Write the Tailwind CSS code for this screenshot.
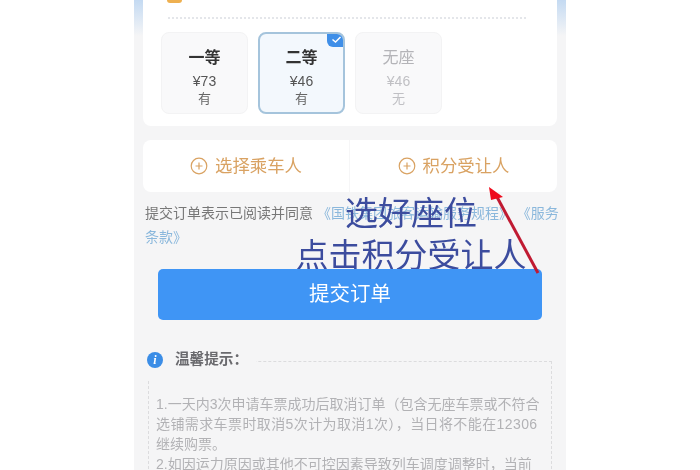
<!DOCTYPE html>
<html lang="zh">
<head>
  <meta charset="UTF-8">
  <title>提交订单</title>
  <script src="https://cdn.jsdelivr.net/npm/@tailwindcss/browser@4"></script>
</head>
<body class="bg-white overflow-hidden font-['Liberation_Sans','Noto_Sans_CJK_SC',sans-serif]">
  <div class="relative w-[700px] h-[470px] overflow-hidden blur-[0.6px]">
    <div class="relative mx-auto w-[432px] h-[470px] overflow-hidden bg-[#f5f5f6] px-[9px]">
      <div class="absolute left-0 right-0 top-0 h-[36px] bg-gradient-to-b from-[#c4daf2] to-[#f5f5f6]"></div>

      <!-- seat card -->
      <div class="relative h-[126px] bg-white rounded-b-lg px-[18px]">
        <div class="absolute left-[24px] top-[-6px] w-[15px] h-[9px] rounded-[3px] bg-[#eeb050]"></div>
        <div class="absolute left-[43px] top-[-11px] text-[10px] leading-[14px] text-[#aaa]">二等座</div>
        <div class="h-[19px] w-[358px] ml-[7px] border-b-2 border-dotted border-[#e4e6ea]"></div>
        <div class="flex gap-[10px] pt-[13px]">
          <div class="w-[87px] h-[82px] flex flex-col items-center rounded-lg bg-[#f9f9fa] border border-[#f3f3f4] pt-[15px]">
            <span class="text-[16px] leading-[20px] font-bold text-[#333]">一等</span>
            <span class="text-[14px] leading-[18px] mt-[4px] font-medium text-[#555]">¥73</span>
            <span class="text-[13px] leading-[18px] text-[#666]">有</span>
          </div>
          <div class="relative w-[87px] h-[82px] flex flex-col items-center rounded-lg bg-[#f3f8fd] border-2 border-[#a5c4dc] pt-[14px] overflow-hidden">
            <span class="text-[16px] leading-[20px] font-bold text-[#333]">二等</span>
            <span class="text-[14px] leading-[18px] mt-[4px] font-medium text-[#555]">¥46</span>
            <span class="text-[13px] leading-[18px] text-[#666]">有</span>
            <div class="absolute right-[-2px] top-[-2px] w-[18px] h-[15px] rounded-bl-md bg-[#3f8fe8] flex items-center justify-center">
              <svg width="11" height="9" viewBox="0 0 11 9" fill="none" stroke="#fff" stroke-width="1.5"><path d="M1.5 4.5 4.5 7 9.5 2"/></svg>
            </div>
          </div>
          <div class="w-[87px] h-[82px] flex flex-col items-center rounded-lg bg-[#f9f9fa] border border-[#f3f3f4] pt-[15px]">
            <span class="text-[16px] leading-[20px] text-[#b4b4b8]">无座</span>
            <span class="text-[14px] leading-[18px] mt-[4px] text-[#c0c0c4]">¥46</span>
            <span class="text-[13px] leading-[18px] text-[#c0c0c4]">无</span>
          </div>
        </div>
      </div>

      <!-- passengers -->
      <div class="relative mt-[14px] h-[52px] bg-white rounded-lg flex text-[17.4px] text-[#d9a262]">
        <div class="w-[207px] flex items-center justify-center gap-[7px] border-r border-[#f6f6f7]">
          <svg width="18" height="18" viewBox="0 0 18 18" fill="none" stroke="#d9a262" stroke-width="1.2"><circle cx="9" cy="9" r="7.8"/><path d="M9 5.5v7M5.5 9h7"/></svg>
          <span>选择乘车人</span>
        </div>
        <div class="flex-1 flex items-center justify-center gap-[7px]">
          <svg width="18" height="18" viewBox="0 0 18 18" fill="none" stroke="#d9a262" stroke-width="1.2"><circle cx="9" cy="9" r="7.8"/><path d="M9 5.5v7M5.5 9h7"/></svg>
          <span>积分受让人</span>
        </div>
      </div>

      <!-- terms -->
      <p class="relative mt-[9px] px-[2px] text-[14px] leading-[24px] text-[#777] whitespace-nowrap">提交订单表示已阅读并同意 <span class="text-[#8bb8dc]">《国铁集团旅客运输服务规程》 《服务<br>条款》</span></p>

      <!-- submit -->
      <div class="relative z-10 mt-[20px] mx-[15px] h-[51px] rounded-[5px] bg-[#3f95f5] flex items-center justify-center text-[20.5px] text-white">提交订单</div>

      <!-- tips -->
      <div class="relative z-10 mt-[30px] -mb-[19px] w-[113px] h-[30px] bg-[#f5f5f6] flex items-center pl-[4px] pb-[10px]">
        <div class="shrink-0 w-[16px] h-[16px] rounded-full bg-[#3b8de6] flex items-center justify-center text-white text-[12px] leading-none italic font-bold font-['Liberation_Serif',serif]">i</div>
        <span class="ml-[12px] text-[14.6px] font-bold text-[#6a6a6e] whitespace-nowrap">温馨提示：</span>
      </div>
      <div class="relative mx-[5px] border border-dashed border-[#dcdcde] border-b-0 pl-[7px] pr-[8px] pt-[32px] text-[14px] leading-[20px] text-[#b2b2b5]">
        <p>1.一天内3次申请车票成功后取消订单（包含无座车票或不符合<br><span class="tracking-[0.4px]">选铺需求车票时取消5次计为取消1次），当日将不能在12306</span><br>继续购票。</p>
        <p>2.如因运力原因或其他不可控因素导致列车调度调整时，当前</p>
      </div>
    </div>

    <!-- annotation over the screenshot -->
    <div class="absolute left-[295px] top-[193px] w-[232px] text-center text-[33px] leading-[42px] text-[#3c4c9e] whitespace-nowrap z-0">选好座位<br>点击积分受让人</div>
    <svg class="absolute left-0 top-0 z-20" width="700" height="470" fill="none">
      <path d="M538 273 497 197" stroke="#c01a32" stroke-width="3"/>
      <path d="M489 187 503 197 491 200Z" fill="#ee0a1c"/>
    </svg>
  </div>
</body>
</html>
